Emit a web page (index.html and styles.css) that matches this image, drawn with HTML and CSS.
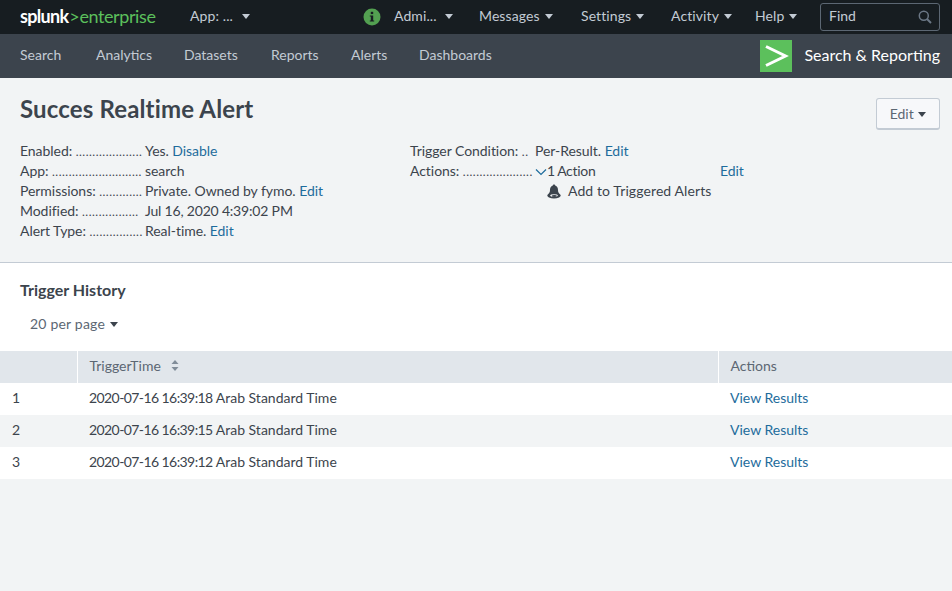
FILE: index.html
```html
<!DOCTYPE html>
<html lang="en">
<head>
    <meta charset="UTF-8">
    <title>Succes Realtime Alert</title>
    <link rel="stylesheet" href="styles.css">
</head>
<body>
    <header class="topbar">
        <a class="logo"><b>splunk</b><span class="logo-green"><span class="logo-gt">&gt;</span>enterprise</span></a>
        <a class="menu menu-app">App: ... <i class="caret"></i></a>
        <div class="topbar-right">
            <svg class="info-icon" width="18" height="18" viewBox="0 0 18 18">
                <circle cx="9" cy="9" r="8.5" fill="#53a051"/>
                <rect x="7.8" y="3.8" width="2.4" height="2.3" fill="#171d21"/>
                <path d="M6.8 7.4h3.4v5h1v1.2H6.800v-1.200h1v-3.800h-1z" fill="#171d21"/>
            </svg>
            <a class="menu menu-admin">Admi... <i class="caret"></i></a>
            <a class="menu menu-messages">Messages<i class="caret"></i></a>
            <a class="menu menu-settings">Settings<i class="caret"></i></a>
            <a class="menu menu-activity">Activity<i class="caret"></i></a>
            <a class="menu menu-help">Help<i class="caret"></i></a>
            <div class="find">
                <span class="find-label">Find</span>
                <svg width="14" height="14" viewBox="0 0 14 14" fill="none" stroke="#6b7785" stroke-width="1.5">
                    <circle cx="5.8" cy="5.8" r="4.5"/>
                    <path d="M9 9l4 4" stroke-width="2"/>
                </svg>
            </div>
        </div>
    </header>

    <nav class="appbar">
        <a>Search</a>
        <a>Analytics</a>
        <a>Datasets</a>
        <a>Reports</a>
        <a>Alerts</a>
        <a>Dashboards</a>
        <div class="app-name">
            <span class="app-icon">
                <svg width="32" height="32" viewBox="0 0 32 32" fill="none" stroke="#fff" stroke-width="3">
                    <path d="M6 6.500L25.500 16 6 25.500"/>
                </svg>
            </span>
            <span class="app-label">Search &amp; Reporting</span>
        </div>
    </nav>

    <section class="summary">
        <div class="title-row">
            <h1>Succes Realtime Alert</h1>
            <button class="edit-btn">Edit <i class="caret caret-dark"></i></button>
        </div>
        <div class="details">
            <div class="col col-left">
                <div class="row"><span class="key">Enabled: <em>....................</em></span><span>Yes. <a>Disable</a></span></div>
                <div class="row"><span class="key">App: <em>...........................</em></span><span>search</span></div>
                <div class="row"><span class="key">Permissions: <em>.............</em></span><span>Private. Owned by fymo. <a>Edit</a></span></div>
                <div class="row"><span class="key">Modified: <em>.................</em></span><span><span class="stamp-short">Jul 16, 2020 4:39:02</span> PM</span></div>
                <div class="row"><span class="key">Alert Type: <em>................</em></span><span>Real-time. <a>Edit</a></span></div>
            </div>
            <div class="col col-right">
                <div class="row"><span class="key">Trigger Condition: <em>..</em></span><span>Per-Result. <a>Edit</a></span></div>
                <div class="row">
                    <span class="key">Actions: <em>.....................</em></span>
                    <span class="actions-value">
                        <svg width="12" height="8" viewBox="0 0 12 8" fill="none" stroke="#1e6c9c" stroke-width="1.2"><path d="M1 1.500l5 5 5-5"/></svg><span class="actions-count">1 Action</span>
                    </span>
                    <a>Edit</a>
                </div>
                <div class="row row-bell">
                    <svg width="14" height="15" viewBox="0 0 14 15">
                        <path d="M7 0.500c.7 0 1.200.5 1.200 1.100 2 .6 2.800 2.300 2.800 4.400 0 2.200.7 3.200 2.200 4.500 1 1 .4 2.500-1.200 3C10.500 14.200 8.800 14.500 7 14.500s-3.500-.3-5-1c-1.600-.5-2.200-2-1.200-3C2.300 9.200 3 8.200 3 6c0-2.100.8-3.800 2.800-4.400C5.800 1 6.300.5 7 .5z" fill="#3c444d"/>
                        <ellipse cx="7" cy="11.600" rx="3.800" ry="1.300" fill="#f2f4f5"/>
                        <ellipse cx="7.300" cy="12.100" rx="2.600" ry="1" fill="#3c444d"/>
                    </svg>
                    <span>Add to Triggered Alerts</span>
                </div>
            </div>
        </div>
    </section>

    <section class="history">
        <h2>Trigger History</h2>
        <a class="per-page">20 per page <i class="caret caret-dark"></i></a>
        <table>
            <thead>
                <tr>
                    <th class="col-num"></th>
                    <th class="col-time">TriggerTime
                        <svg class="sort" width="8" height="11" viewBox="0 0 8 11" fill="#818d99"><path d="M4 0l3.500 4H.5zM4 11L.5 7h7z"/></svg>
                    </th>
                    <th>Actions</th>
                </tr>
            </thead>
            <tbody>
                <tr><td>1</td><td><span class="stamp">2020-07-16 16:39:18</span> Arab Standard Time</td><td><a>View Results</a></td></tr>
                <tr class="odd"><td>2</td><td><span class="stamp">2020-07-16 16:39:15</span> Arab Standard Time</td><td><a>View Results</a></td></tr>
                <tr><td>3</td><td><span class="stamp">2020-07-16 16:39:12</span> Arab Standard Time</td><td><a>View Results</a></td></tr>
            </tbody>
        </table>
    </section>
</body>
</html>
```

FILE: styles.css
```css
* {
    box-sizing: border-box;
}

html, body {
    height: 100%;
}

body {
    margin: 0;
    overflow: hidden;
    font-family: Lato, "Liberation Sans", sans-serif;
    font-size: 14px;
    line-height: 20px;
    color: #3c444d;
    background-color: #f2f4f5;
}

a {
    color: #1e6c9c;
}

.caret {
    display: inline-block;
    width: 0;
    height: 0;
    margin-left: 5px;
    vertical-align: 2px;
    border-left: 4px solid transparent;
    border-right: 4px solid transparent;
    border-top: 5px solid #c3cbd4;
}

.caret-dark {
    margin-left: 1px;
    border-top-color: #3c444d;
}

/* top black bar */
.topbar {
    display: flex;
    align-items: center;
    height: 34px;
    padding-left: 20px;
    background-color: #171d21;
}

.logo {
    width: 170px;
    padding-bottom: 2px;
    font-size: 18px;
    color: #fff;
}

.logo b {
    letter-spacing: -0.7px;
}

.logo-green {
    letter-spacing: -0.4px;
    color: #5cc05c;
}

.logo-gt {
    margin-left: 1px;
}

.menu {
    padding-bottom: 2px;
    letter-spacing: 0.1px;
    color: #c3cbd4;
}

.topbar-right {
    display: flex;
    align-items: center;
    margin-left: auto;
    padding-right: 12px;
}

.info-icon {
    margin-right: 13px;
}

.menu-admin {
    width: 85px;
}

.menu-messages {
    width: 102px;
}

.menu-settings {
    width: 90px;
}

.menu-activity {
    width: 84px;
}

.menu-help {
    width: 65px;
}

.find {
    display: flex;
    align-items: center;
    justify-content: space-between;
    width: 120px;
    height: 28px;
    padding: 0 7px 0 8px;
    border: 1px solid #5c6773;
    border-radius: 3px;
    color: #c3cbd4;
}

.find-label {
    padding-bottom: 2px;
}

/* app nav */
.appbar {
    display: grid;
    grid-template-columns: 76px 88px 87px 80px 68px auto 1fr;
    align-items: center;
    height: 44px;
    padding: 0 12px 0 20px;
    background-color: #3c444d;
}

.appbar a {
    padding-bottom: 2px;
    color: #c3cbd4;
}

.app-name {
    display: flex;
    align-items: center;
    justify-content: flex-end;
    gap: 12px;
    font-size: 16px;
    color: #fff;
}

.app-label {
    padding-bottom: 2px;
}

.app-icon {
    display: block;
    height: 32px;
    background-color: #5cc05c;
}

.app-icon svg {
    display: block;
}

/* alert summary */
.summary {
    height: 185px;
    padding: 20px 12px 0 20px;
    border-bottom: 1px solid #c3cbd4;
}

.title-row {
    display: flex;
    justify-content: space-between;
    align-items: flex-start;
    height: 43px;
}

h1 {
    margin: -1px 0 0;
    font-size: 24px;
    line-height: 24px;
    font-weight: 700;
    letter-spacing: 0.15px;
}

.edit-btn {
    width: 64px;
    height: 32px;
    padding: 0;
    font: inherit;
    color: #5c6773;
    background-color: #f7f8fa;
    border: 1px solid #c3cbd4;
    border-bottom-width: 2px;
    border-radius: 3px;
}

.details {
    display: flex;
}

.col-left {
    width: 390px;
}

.row {
    display: flex;
    height: 20px;
    letter-spacing: -0.05px;
}

.key {
    flex: none;
    width: 125px;
    white-space: nowrap;
}

.key em {
    font-style: normal;
    font-size: 12px;
    letter-spacing: 0.5px;
}

.stamp-short {
    letter-spacing: -0.2px;
}

.actions-value {
    width: 185px;
}

.actions-count {
    letter-spacing: -0.3px;
    word-spacing: -0.5px;
}

.row-bell {
    align-items: center;
    padding-left: 137px;
    gap: 7px;
}

.row-bell span {
    letter-spacing: 0.1px;
}

/* trigger history */
.history {
    height: 216px;
    padding-top: 17px;
    background-color: #fff;
}

h2 {
    margin: 0 0 0 20px;
    font-size: 16px;
    line-height: 20px;
    font-weight: 700;
}

.per-page {
    display: block;
    margin: 14px 0 17px 30px;
    letter-spacing: 0.2px;
    color: #5c6773;
}

table {
    width: 100%;
    border-collapse: collapse;
}

th {
    height: 32px;
    padding: 0 12px 2px;
    text-align: left;
    font-weight: 400;
    color: #5c6773;
    background-color: #e1e6eb;
    border-left: 1px solid #fff;
}

th:first-child {
    border-left: 0;
}

.col-num {
    width: 77px;
}

.col-time {
    width: 641px;
}

.sort {
    margin-left: 7px;
}

td {
    height: 32px;
    padding: 0 12px 2px;
}

.stamp {
    letter-spacing: -0.58px;
}

.odd td {
    background-color: #f2f4f5;
}
```
